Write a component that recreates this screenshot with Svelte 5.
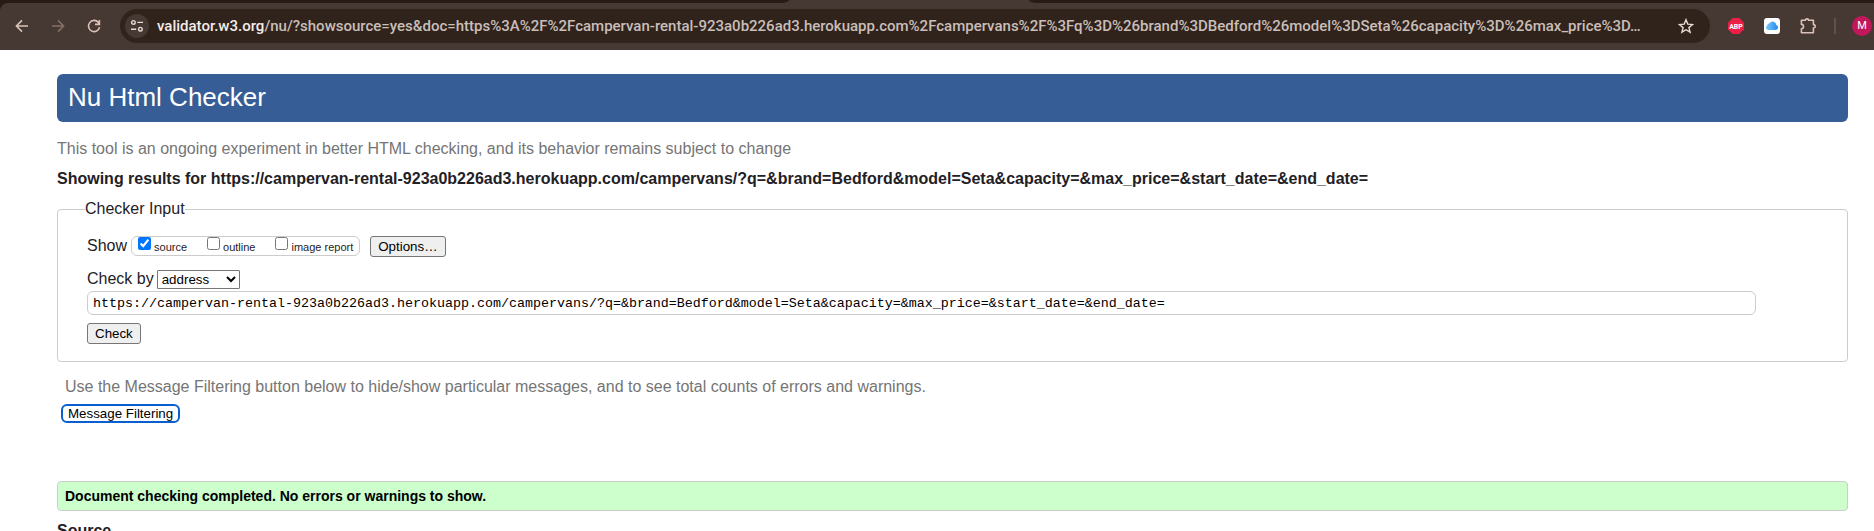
<script lang="ts">
  const target =
    'https://campervan-rental-923a0b226ad3.herokuapp.com/campervans/?q=&brand=Bedford&model=Seta&capacity=&max_price=&start_date=&end_date=';

  let address = $state(target);
  let method = $state('address');
  let options = $state([
    { id: 'source', label: 'source', on: true },
    { id: 'outline', label: 'outline', on: false },
    { id: 'image-report', label: 'image report', on: false }
  ]);
</script>

<div class="window">
  <header class="chrome">
    <div class="tabs">
      <span class="tab before"></span>
      <span class="tab active"></span>
      <span class="tab after"></span>
    </div>
    <div class="toolbar">
      <nav class="nav" aria-label="Browser">
        <button class="icon" aria-label="Back">
          <svg width="16" height="16" viewBox="0 0 16 16"><path d="M14 8H2.8M8 2.4 2.4 8 8 13.6" /></svg>
        </button>
        <button class="icon dim" aria-label="Forward">
          <svg width="16" height="16" viewBox="0 0 16 16"><path d="M2 8h11.2M8 2.4 13.6 8 8 13.6" /></svg>
        </button>
        <button class="icon" aria-label="Reload">
          <svg width="16" height="16" viewBox="0 0 16 16"><path d="M13.6 9.2A5.6 5.6 0 1 1 12.4 4.4L13 5.2M13.4 2v4.4H9" /></svg>
        </button>
      </nav>
      <div class="omnibox">
        <button class="site" aria-label="Site information">
          <svg width="14" height="14" viewBox="0 0 14 14">
            <circle cx="3.4" cy="3.4" r="1.8" /><path d="M7.4 3.4H13M1 10.2h5.2" /><circle cx="10.4" cy="10.2" r="1.8" />
          </svg>
        </button>
        <div class="url"><span class="host">validator.w3.org</span>/nu/?showsource=yes&amp;doc=https%3A%2F%2Fcampervan-rental-923a0b226ad3.herokuapp.com%2Fcampervans%2F%3Fq%3D%26brand%3DBedford%26model%3DSeta%26capacity%3D%26max_price%3D…</div>
        <button class="icon star" aria-label="Bookmark">
          <svg width="16" height="16" viewBox="0 0 16 16"><path d="m8 1.7 1.8 4.4 4.8.4-3.7 3.1 1.2 4.6L8 11.7l-4.1 2.5 1.2-4.6L1.4 6.5l4.8-.4z" /></svg>
        </button>
      </div>
      <div class="extensions">
        <button class="icon" aria-label="Adblock Plus">
          <svg width="16" height="16" viewBox="0 0 16 16">
            <path class="abp" d="M4.7 0h6.6L16 4.7v6.6L11.3 16H4.7L0 11.3V4.7z" />
            <text x="8" y="10.8" text-anchor="middle">ABP</text>
          </svg>
        </button>
        <button class="icon" aria-label="iCloud">
          <svg width="16" height="16" viewBox="0 0 16 16">
            <defs>
              <linearGradient id="cloud" x1="0" y1="0" x2="1" y2="0">
                <stop offset="0" stop-color="#7cc8fb" /><stop offset="1" stop-color="#2488ee" />
              </linearGradient>
            </defs>
            <rect class="tile" width="16" height="16" rx="3" />
            <path class="cloud" d="M4.3 12A2.4 2.4 0 0 1 3.2 7.5 2 2 0 0 1 5.3 5.6 3.7 3.7 0 0 1 12.3 7 2.6 2.6 0 0 1 12 12z" />
          </svg>
        </button>
        <button class="icon" aria-label="Extensions">
          <svg width="16" height="16" viewBox="0 0 16 16">
            <path class="puzzle" d="M1.4 2.2H5.4C5.4 .4 8.6 .4 8.6 2.2H13.4V6.6C15.8 6.6 15.8 10 13.4 10V14.8H1.4V10.8C4.2 10.8 4.2 6.4 1.4 6.4Z" />
          </svg>
        </button>
      </div>
      <span class="divider"></span>
      <button class="avatar" aria-label="Profile">M</button>
    </div>
  </header>

  <main>
    <h1>Nu Html Checker</h1>
    <p class="intro">This tool is an ongoing experiment in better HTML checking, and its behavior remains subject to change</p>
    <h2>Showing results for {target}</h2>

    <form onsubmit={(e) => e.preventDefault()}>
      <fieldset>
        <legend>Checker Input</legend>
        <div class="row show">
          <span>Show</span>
          <div class="checks">
            {#each options as option (option.id)}
              <label for={option.id}>
                <input type="checkbox" id={option.id} bind:checked={option.on} />
                <span>{option.label}</span>
              </label>
            {/each}
          </div>
          <button type="button" class="push">Options…</button>
        </div>
        <div class="row method">
          <label for="method">Check by</label>
          <select id="method" bind:value={method}>
            <option value="address">address</option>
            <option value="upload">file upload</option>
            <option value="text">text input</option>
          </select>
        </div>
        <input class="address" type="text" aria-label="Address" bind:value={address} />
        <button type="submit" class="push">Check</button>
      </fieldset>
    </form>

    <section class="filtering">
      <p>Use the Message Filtering button below to hide/show particular messages, and to see total counts of errors and warnings.</p>
      <button type="button" class="filter">Message Filtering</button>
    </section>

    <p class="success">Document checking completed. No errors or warnings to show.</p>
    <h2 class="source">Source</h2>
  </main>
</div>

<style>
  :global(body) {
    margin: 0;
    background: #fff;
  }
  .window {
    height: 100vh;
    overflow: hidden;
    font: 16px/20px "Liberation Sans", Arial, sans-serif;
    color: #1f2126;
  }
  button {
    color: inherit;
    font-family: inherit;
  }

  .chrome {
    background: #281b14;
  }
  .tabs {
    display: flex;
    height: 3px;
    background: #463832;
  }
  .tab {
    flex: 0 0 240px;
  }
  .before,
  .after {
    background: #281b14;
  }
  .before {
    flex: 42 1 0;
    border-bottom-right-radius: 8px 3px;
  }
  .after {
    flex: 45 1 0;
    border-bottom-left-radius: 8px 3px;
  }
  .toolbar {
    display: flex;
    align-items: center;
    height: 47px;
    box-sizing: border-box;
    padding: 0 2px 1px 14px;
    background: #463832;
    border-top-left-radius: 8px;
  }
  .nav {
    display: flex;
    gap: 20px;
    margin-right: 18px;
  }
  .icon {
    display: flex;
    padding: 0;
    border: 0;
    background: none;
  }
  svg {
    fill: none;
    stroke: #dcc3b8;
    stroke-width: 1.6;
  }
  .dim svg {
    stroke: #867066;
  }
  .omnibox {
    flex: 1;
    min-width: 0;
    display: flex;
    align-items: center;
    height: 34px;
    padding: 0 16px 0 5px;
    box-sizing: border-box;
    border-radius: 17px;
    background: #30231c;
  }
  .site {
    display: flex;
    align-items: center;
    justify-content: center;
    flex: none;
    width: 24px;
    height: 24px;
    padding: 0;
    border: 0;
    border-radius: 50%;
    background: #463832;
  }
  .site svg,
  .star svg {
    stroke: #e6dad5;
    stroke-width: 1.4;
  }
  .url {
    flex: 1;
    min-width: 0;
    overflow: hidden;
    padding-left: 8px;
    white-space: nowrap;
    font: 500 15px/20px Roboto, sans-serif;
    color: #c9beb9;
  }
  .host {
    color: #f3ece9;
  }
  .extensions {
    display: flex;
    gap: 20px;
    margin-left: 18px;
  }
  .abp {
    fill: #ed1e45;
    stroke: none;
  }
  text {
    fill: #fff;
    stroke: none;
    font: bold 7px Roboto, sans-serif;
  }
  .tile {
    fill: #fff;
    stroke: none;
  }
  .cloud {
    fill: url(#cloud);
    stroke: none;
  }
  .puzzle {
    stroke-linejoin: round;
  }
  .divider {
    width: 2px;
    height: 16px;
    margin: 0 16px 0 18px;
    background: #635047;
  }
  .avatar {
    width: 20px;
    height: 20px;
    padding: 0;
    border: 0;
    border-radius: 50%;
    background: #c2185b;
    color: #fff;
    font: 11px/20px Roboto, sans-serif;
  }

  main {
    padding: 24px 26px 0 57px;
  }
  h1 {
    margin: 0;
    padding: 7px 11px 9px;
    border-radius: 6px;
    background: #365d95;
    color: #fff;
    font-size: 26px;
    font-weight: 400;
    line-height: 32px;
  }
  p {
    margin: 0;
    color: #757575;
  }
  .intro {
    padding-top: 17px;
  }
  h2 {
    margin: 10px 0 0;
    font-size: 16px;
    line-height: 20px;
  }
  fieldset {
    margin: 10px 0 0;
    padding: 16px 3px 17px 29px;
    border: 1px solid #ccc;
    border-radius: 4px;
    min-width: 0;
  }
  legend {
    margin-left: -2px;
    padding: 0;
  }
  .row {
    display: flex;
    align-items: center;
  }
  .show {
    height: 22px;
  }
  .checks {
    display: flex;
    gap: 20px;
    height: 20px;
    box-sizing: border-box;
    margin: 0 10px 0 4px;
    padding: 0 6px;
    border: 1px solid #ccc;
    border-radius: 6px;
    font-size: 11px;
    line-height: 20px;
  }
  .checks label {
    display: flex;
    gap: 3px;
  }
  .checks input {
    width: 13px;
    height: 13px;
    margin: 0;
    accent-color: #0075ff;
  }
  .push {
    height: 21px;
    padding: 0 7px;
    border: 1px solid #767676;
    border-radius: 3px;
    background: #efefef;
    color: #000;
  }
  .method {
    gap: 3px;
    margin: 12px 0 2px;
  }
  select {
    width: 83px;
    height: 19px;
    border: 1px solid #767676;
    border-radius: 1px;
    background: #fff;
    color: #000;
    font-family: inherit;
  }
  .address {
    display: block;
    width: 95%;
    height: 24px;
    box-sizing: border-box;
    margin-bottom: 8px;
    padding: 0 5px;
    border: 1px solid #ccc;
    border-radius: 6px;
    color: #000;
    font-family: "Liberation Mono", monospace;
  }
  .filtering {
    padding: 15px 4px 0;
  }
  .filtering p {
    padding: 0 4px 7px;
  }
  .filter {
    display: block;
    height: 19px;
    padding: 0 5px;
    border: 2px solid #0a5fd0;
    border-radius: 6px;
    background: #fff;
    color: #000;
    line-height: 15px;
  }
  .success {
    margin-top: 58px;
    padding: 4px 7px;
    border: 1px solid #ccc;
    border-radius: 4px;
    background: #cfc;
    color: #000;
    font-size: 14px;
    font-weight: 700;
  }
</style>
